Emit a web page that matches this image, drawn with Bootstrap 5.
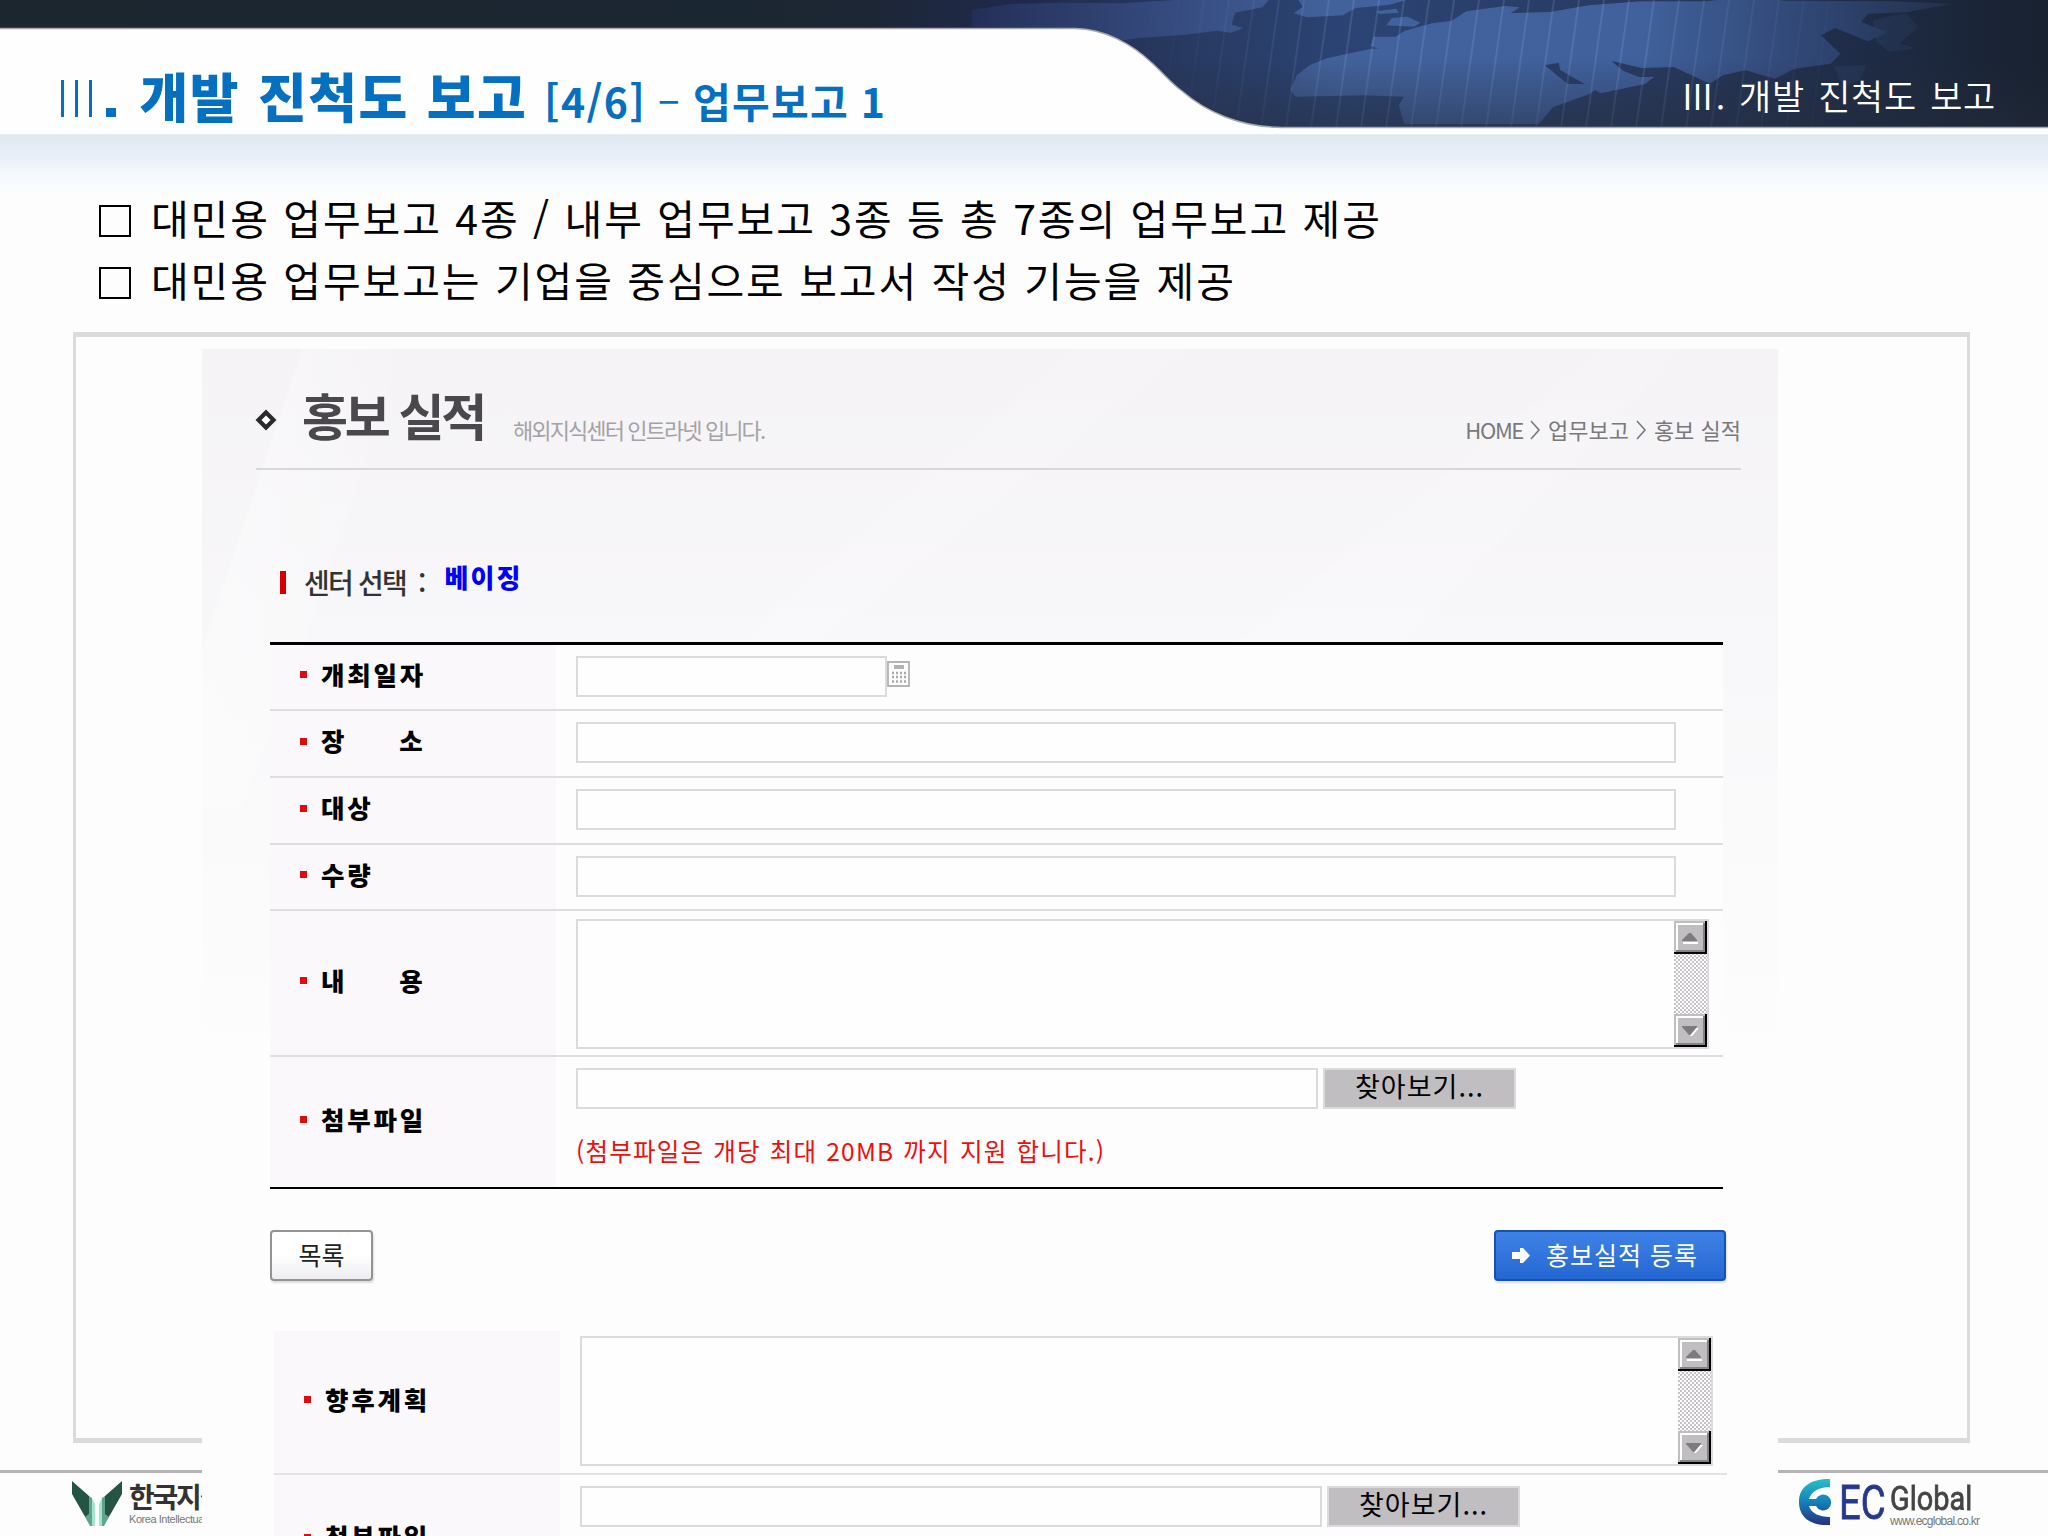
<!DOCTYPE html>
<html lang="ko">
<head>
<meta charset="utf-8">
<title>개발 진척도 보고</title>
<link href="https://cdn.jsdelivr.net/npm/bootstrap@5.3.0/dist/css/bootstrap.min.css" rel="stylesheet">
<script src="https://cdn.jsdelivr.net/npm/bootstrap@5.3.0/dist/js/bootstrap.bundle.min.js"></script>
<style>
html,body{margin:0;background:#fdfdfd}
body{font-family:"Noto Sans CJK KR",sans-serif;color:#000}
.slide{width:2048px;height:1536px;background:#fdfdfd}
.slide *{white-space:nowrap}
.top-band{height:135px}
.band-art{left:0;top:0;width:2048px;height:135px}
.band-title{color:#0570c0;font-weight:700;padding-left:61px;height:135px}
.numeral{gap:11.5px;margin-right:14px;margin-top:80px}
.numeral i{display:block;width:2.5px;height:37px;background:#0570c0}
.t-dot{width:10px;height:9px;background:#0570c0;margin:108px 24px 0 0}
.t-main{font-size:53px;line-height:60px;letter-spacing:1.4px;word-spacing:2px;margin:65px 17px 0 0;font-weight:900}
.t-sub{font-size:41px;line-height:50px;margin-top:75px;letter-spacing:1.3px;word-spacing:-1px}
.t-sub .thin{font-weight:400}
.crumb-top{color:#fff;font-size:35px;line-height:44px;letter-spacing:.7px;word-spacing:2.8px;margin:73px 52px 0 0;font-weight:350}
.sky{height:60px;background:linear-gradient(#dfe8ec,#e6edf7 25%,#ebf0fb 45%,#f3f8fd 60%,#f9fdfe 85%,#fdfdfd)}
.points{margin-top:-4px;height:141px}
.point{height:62px;padding-left:99px;gap:20px;font-size:41px;line-height:50px;letter-spacing:1.9px;word-spacing:.1px;padding-top:1px}
.point i{width:32px;height:32px;border:2px solid #000;margin-top:13px}
.frame{width:1897px;height:1111px;margin-left:73px;border:3px solid #dcdadd;border-top-width:5px;border-bottom-width:5px}
.shot{width:1576px;height:1188px;margin:12px 0 0 126px;background:#fdfdfd;z-index:2}
.shot-bg{left:0;top:0;width:1576px;height:700px}
.shot-head{height:121px;margin:0 37px 0 54px;border-bottom:2px solid #d8d6d9}
.diamond{width:22px;height:22px;margin:60px 0 0 -1px}
.h-title{font-size:50px;line-height:60px;letter-spacing:-3.2px;color:#4a484c;font-weight:700;margin:35px 0 0 25px}
.h-sub{font-size:22px;line-height:30px;letter-spacing:-1.9px;color:#a5a2a6;margin:65px 0 0 29px}
.trail{gap:7px;color:#7b787c;font-size:22px;line-height:30px;margin-top:65px}
.trail .home{letter-spacing:-1.4px}
.center-pick{height:172px;padding-left:78px}
.center-pick i{width:6px;height:23px;background:#d40000;margin-top:101px}
.c-label{font-size:28px;line-height:36px;letter-spacing:-1.8px;color:#333;margin:94px 0 0 18px;font-weight:500}
.c-name{font-size:26px;line-height:30px;font-weight:900;color:#00f;letter-spacing:2px;margin:92px 0 0 20px}
.grid-form{margin-left:68px;width:1453px;border-top:3px solid #000;border-bottom:2px solid #000}
.f-row{border-bottom:2px solid #dfdde0;height:67px}
.f-row:last-child{border-bottom:0}
.f-label{width:286px;background:#faf8fb;padding:0 0 5px 30px;font-size:25.5px;font-weight:900;letter-spacing:2.8px;line-height:30px;gap:14px}
.f-label:before{content:"";width:7px;height:7px;background:#e00b0b;flex:none}
.f-label .far{margin-left:32px}
.f-label span{position:relative;top:-1px}
.f-val{background:#fdfdfd;padding:0 0 2px 20px;flex:1}
.file-val{padding-top:11px}
.line-in{height:41px;width:1100px;border:2px solid #dcdadd;border-radius:0;background:#fefefe;padding:0}
.line-in.form-control{flex:none}
.w-date{width:311px}.w-file{width:742px}
.area{width:1133px;height:130px;border:2px solid #dcdadd;background:#fefefe}
.bar{width:33px;background:repeating-conic-gradient(#c4c2c5 0 25%,#fff 0 50%) 0 0/4px 4px}
.bar svg{display:block;width:33px;height:33px}
.browse{height:41px;width:193px;margin-left:5px;border:2px solid #dcdadd;border-radius:0;background:#c0bec1;padding:0 0 5px 0;font-size:27px;line-height:30px;letter-spacing:1px;color:#000}
.note{color:#f00d0d;font-size:24.5px;line-height:30px;margin-top:27px;letter-spacing:1.2px;word-spacing:1px}
.acts{margin:41px 52px 0 68px;height:101px}
.b-list{width:103px;height:51px;border:2px solid #949296;border-radius:4px;background:linear-gradient(#fff 50%,#eeecef);box-shadow:1px 2px 2px #ddd;padding:0 0 4px;font-size:25px;line-height:30px;color:#222}
.b-go{width:232px;height:51px;border:2px solid #1a50b4;border-radius:4px;background:linear-gradient(#3f82e6,#2567d2);color:#fff;padding:0 0 0 16px;font-size:25px;line-height:30px;letter-spacing:1px;box-shadow:1px 2px 2px #ddd}
.b-go span{padding-bottom:4px}
.more{margin-left:72px;width:1453px;height:206px}
.more .f-row{height:144px;border-color:#e4e2e5}
.foot{left:0;bottom:0;width:2048px;height:66px;border-top:3px solid #b5b3b6}
.logo-a{left:72px;top:8px;width:50px;height:46px}
.kname{font-size:28px;line-height:34px;font-weight:700;color:#333;letter-spacing:-2.2px}
.kline{font:11px/12px "Liberation Sans",sans-serif;color:#777;letter-spacing:-.45px}
.k-block{padding:6px 0 0 129px}
.ec-block{padding:6px 66px 0 0;gap:4px}
.ec{font:49px/46px Roboto,sans-serif;color:#26388c;transform:scaleX(.78);transform-origin:0 0;width:47px;-webkit-text-stroke:.8px #26388c;margin-top:1px}
.gl{font:34px/28px Roboto,sans-serif;color:#444;transform:scaleX(.85);transform-origin:0 0;-webkit-text-stroke:.8px #444;margin:5px 0 3px;width:92px}
.url{font:12px/12px "Liberation Sans",sans-serif;color:#777;letter-spacing:-.75px}
</style>
</head>
<body>
<svg width="0" height="0" class="position-absolute">
  <defs>
    <symbol id="up" viewBox="0 0 33 33"><path fill="#c0bec1" d="M0 0h33v33H0z"/><path fill="none" stroke="#fff" stroke-width="2" d="M3 29V3h26"/><path fill="none" stroke="#848286" stroke-width="2" d="M2 30h28V2"/><path fill="none" stroke="#000" stroke-width="2" d="M0 32h32V0"/><path fill="#fff" d="M9 21h15v2H9z"/><path fill="#7d7b7e" d="M8 20v-1l7-7h2l6 7v1z"/></symbol>
    <symbol id="down" viewBox="0 0 33 33"><path fill="#c0bec1" d="M0 0h33v33H0z"/><path fill="none" stroke="#fff" stroke-width="2" d="M3 29V3h26"/><path fill="none" stroke="#848286" stroke-width="2" d="M2 30h28V2"/><path fill="none" stroke="#000" stroke-width="2" d="M0 32h32V0"/><path fill="#fff" d="M16 22h2l7-8h-3z"/><path fill="#7d7b7e" d="M8 12h15v1l-7 8h-1l-7-8z"/></symbol>
  </defs>
</svg>
<div class="slide position-relative overflow-hidden">
  <header class="top-band position-relative">
    <svg class="band-art position-absolute" viewBox="0 0 2048 135">
      <defs>
        <linearGradient id="sea" gradientUnits="userSpaceOnUse" x1="0" x2="2048" y1="0" y2="0"><stop offset="0" stop-color="#1b262f"/><stop offset=".42" stop-color="#1c2634"/><stop offset=".5" stop-color="#20294c"/><stop offset=".58" stop-color="#283a62"/><stop offset=".66" stop-color="#2b4474"/><stop offset=".8" stop-color="#283a60"/><stop offset=".9" stop-color="#1f2d48"/><stop offset="1" stop-color="#18212f"/></linearGradient>
        <linearGradient id="land" gradientUnits="userSpaceOnUse" x1="-80" x2="1500" y1="0" y2="0"><stop offset="0" stop-color="#242f58"/><stop offset=".2" stop-color="#364c80"/><stop offset=".35" stop-color="#42629c"/><stop offset=".65" stop-color="#40619c"/><stop offset=".85" stop-color="#2c406a"/><stop offset="1" stop-color="#1d2839"/></linearGradient>
        <linearGradient id="shade" x1="0" x2="0" y1="0" y2="1"><stop offset=".45" stop-color="#252c3c" stop-opacity="0"/><stop offset="1" stop-color="#252c3c" stop-opacity=".5"/></linearGradient>
        <pattern id="rays" width="25" height="130" patternUnits="userSpaceOnUse" patternTransform="skewX(-8)"><path d="M4 0v130" stroke="#a6c2ee" stroke-opacity=".2" stroke-width="1.6"/></pattern>
        <linearGradient id="fadeR"><stop offset="0" stop-color="#000"/><stop offset=".15" stop-color="#222"/><stop offset=".32" stop-color="#fff"/><stop offset=".6" stop-color="#fff"/><stop offset=".82" stop-color="#000"/></linearGradient>
        <mask id="rayMask"><rect x="1024" width="1024" height="135" fill="url(#fadeR)"/></mask>
      </defs>
      <rect width="2048" height="128" fill="url(#sea)"/>
      <g transform="translate(1024 0) scale(.6531 .3333)" fill="url(#land)">
        <path d="M-80 30L-20 12 60 8 150 10 230 0h145l-10 22-42 16-5 36 18 10-20 14-20-6-50 12-70 10-50 14-20-26L40 84-80 80z"/>
        <path d="M420 0h165l-25 14-52 10-20 22-55 6-20-12 14-20z"/>
        <path d="M540 34l30-8 4 12-30 4zM555 76l8-22 24-4 20 18-10 12z"/>
        <path d="M531 138l4-28 34 0 14-18 42-22 30-8 22-28 60-16 22 4-14 18 60-4 60-20 80-12 100 0 60-14 60 12 170 2 85 8-70 25-58 4-10 25 40 30-30 28-50-40-22 22 30 55-15 30-55 15-30 30-45-25-35 15-20 25-55-50-50 3-46-22 18 30 26 20 22-2-14 22-68 28-62-70-2-22-28 10-50-6-26-32-15 10 20 24-22 2-26-22-60 14z"/>
        <path d="M408 270l10-45 20-30 26-20 66-28 52-8 50-20 16 4 8 28 70 8 50 4 26 40 30 48 54 3-20 28-56 40-22 50H582l-8-56 8-26-60-4-106 4z"/>
        <path d="M1300 60l50-20 20 40-30 50 25 15-40 10-20-30z" opacity=".5"/>
        <path d="M1240 200l50-5-10 45-25 20z" opacity=".4"/>
      </g>
      <rect x="1024" width="1024" height="128" fill="url(#rays)" mask="url(#rayMask)"/>
      <rect width="2048" height="128" fill="url(#shade)"/>
      <path d="M-5 28.500H1075C1105 29 1132 44 1152 63C1164 74 1172 84 1182 91C1206 112 1240 127 1282 127.500H2055V140H-5z" fill="#fefefe" stroke="#a5a8ac" stroke-width="1.5"/>
      <path d="M0 134h2048v2H0z" fill="#e8eef0"/>
    </svg>
    <div class="position-relative d-flex justify-content-between align-items-start">
      <div class="band-title d-flex align-items-start">
        <div class="numeral d-flex"><i></i><i></i><i></i></div>
        <span class="t-dot"></span>
        <span class="t-main">개발 진척도 보고</span>
        <span class="t-sub">[4/6] <span class="thin">–</span> 업무보고 1</span>
      </div>
      <div class="crumb-top">Ⅲ. 개발 진척도 보고</div>
    </div>
  </header>
  <div class="sky"></div>
  <section class="points">
    <div class="point d-flex"><i></i><span>대민용 업무보고 4종 / 내부 업무보고 3종 등 총 7종의 업무보고 제공</span></div>
    <div class="point d-flex"><i></i><span>대민용 업무보고는 기업을 중심으로 보고서 작성 기능을 제공</span></div>
  </section>
  <main class="frame">
    <div class="shot position-relative">
      <svg class="shot-bg position-absolute" viewBox="0 0 1576 700" preserveAspectRatio="none">
        <defs><linearGradient id="pv" x1="0" x2="0" y1="0" y2="1"><stop offset="0" stop-color="#f5f3f6"/><stop offset=".45" stop-color="#f8f7f9"/><stop offset="1" stop-color="#fdfdfd"/></linearGradient>
        <linearGradient id="ph" x1="0" x2="1"><stop offset="0" stop-color="#fdfdfd" stop-opacity=".8"/><stop offset="1" stop-color="#fdfdfd" stop-opacity=".1"/></linearGradient></defs>
        <path fill="url(#pv)" d="M0 0h1576v700H0z"/>
        <path fill="url(#ph)" d="M100 0h100l-100 300-60 160H0V300z" opacity=".6"/>
        <path fill="#fff" opacity=".15" d="M870 0h120L620 290h-80zM1400 0h80L1100 400H900z"/>
      </svg>
      <div class="position-relative">
        <div class="shot-head d-flex align-items-start">
          <svg class="diamond" viewBox="0 0 22 22"><path d="M11 3.500L18.500 11 11 18.500 3.500 11z" fill="#fff" stroke="#2b292d" stroke-width="4.2"/></svg>
          <span class="h-title">홍보 실적</span>
          <span class="h-sub">해외지식센터 인트라넷 입니다.</span>
          <div class="trail d-flex ms-auto"><span class="home">HOME</span><svg width="11" height="30" viewBox="0 0 11 30"><path d="M1 7l8 9-8 9" fill="none" stroke="#7b787c" stroke-width="1.6"/></svg><span>업무보고</span><svg width="11" height="30" viewBox="0 0 11 30"><path d="M1 7l8 9-8 9" fill="none" stroke="#7b787c" stroke-width="1.6"/></svg><span>홍보 실적</span></div>
        </div>
        <div class="center-pick d-flex align-items-start"><i></i><span class="c-label">센터 선택 &nbsp;:</span><span class="c-name">베이징</span></div>
        <form class="grid-form">
          <div class="f-row d-flex" style="height:66px"><div class="f-label d-flex align-items-center"><span>개최일자</span></div><div class="f-val d-flex align-items-center"><input class="form-control line-in w-date"><svg class="mb-1" width="23" height="26" viewBox="0 0 23 26"><path d="M1 1h21v24H1z" fill="#fdfdfd" stroke="#b4b2b5" stroke-width="1.8"/><path d="M7 4h10v4H7z" fill="#b4b2b5"/><path d="M5 12h14M5 16h14M5 20.500h14" stroke="#aaa8ab" stroke-width="2.4" stroke-dasharray="2 2"/></svg></div></div>
          <div class="f-row d-flex"><div class="f-label d-flex align-items-center"><span>장<span class="far"></span> &nbsp;소</span></div><div class="f-val d-flex align-items-center"><input class="form-control line-in"></div></div>
          <div class="f-row d-flex"><div class="f-label d-flex align-items-center"><span>대상</span></div><div class="f-val d-flex align-items-center"><input class="form-control line-in"></div></div>
          <div class="f-row d-flex" style="height:66px"><div class="f-label d-flex align-items-center"><span>수량</span></div><div class="f-val d-flex align-items-center"><input class="form-control line-in"></div></div>
          <div class="f-row d-flex" style="height:146px"><div class="f-label d-flex align-items-center"><span>내<span class="far"></span> &nbsp;용</span></div><div class="f-val pt-1 d-flex align-items-center"><div class="area d-flex justify-content-end"><div class="bar d-flex flex-column justify-content-between"><svg><use href="#up"/></svg><svg><use href="#down"/></svg></div></div></div></div>
          <div class="f-row d-flex" style="height:130px"><div class="f-label d-flex align-items-center"><span>첨부파일</span></div><div class="f-val file-val"><div class="d-flex"><input class="form-control line-in w-file"><button type="button" class="btn browse">찾아보기...</button></div><div class="note">(첨부파일은 개당 최대 20MB 까지 지원 합니다.)</div></div></div>
        </form>
        <div class="acts d-flex justify-content-between align-items-start">
          <button type="button" class="btn b-list">목록</button>
          <button type="button" class="btn b-go d-flex align-items-center"><svg width="18" height="17" viewBox="0 0 18 17" class="me-3"><path fill="#fff" d="M0 5h8V1h3l7 7.500-7 7.500H8v-4H0z"/></svg><span>홍보실적 등록</span></button>
        </div>
        <div class="more">
          <div class="f-row d-flex"><div class="f-label d-flex align-items-center"><span>향후계획</span></div><div class="f-val d-flex align-items-center"><div class="area d-flex justify-content-end"><div class="bar d-flex flex-column justify-content-between"><svg><use href="#up"/></svg><svg><use href="#down"/></svg></div></div></div></div>
          <div class="f-row d-flex" style="height:129px"><div class="f-label d-flex align-items-center"><span>첨부파일</span></div><div class="f-val file-val"><div class="d-flex"><input class="form-control line-in w-file"><button type="button" class="btn browse">찾아보기...</button></div></div></div>
        </div>
      </div>
    </div>
  </main>
  <footer class="foot position-absolute d-flex justify-content-between">
    <svg class="logo-a position-absolute" viewBox="0 0 50 46"><path fill="#245443" d="M0 0l17 15v26L12 34 0 13zM50 0L33 15v26l5-7 12-21z"/><path fill="#5fa48a" d="M17 15l3 2v28h-2l-5-9 4-3zM33 15l-3 2v28h2l5-9-4-3z"/><path fill="#a4e4cc" d="M20 17l3 6v22h-3zM30 17l-3 6v22h3z"/></svg>
    <div class="k-block"><div class="kname">한국지식</div><div class="kline">Korea Intellectual</div></div>
    <div class="ec-block d-flex align-items-start">
      <svg width="38" height="47" viewBox="0 0 38 47"><defs><linearGradient id="ecg" x1="0" x2="0" y1="0" y2="1"><stop offset="0" stop-color="#28c0c8"/><stop offset=".5" stop-color="#1480b8"/><stop offset="1" stop-color="#263080"/></linearGradient></defs><path fill="url(#ecg)" d="M33 0v8C21 8 14 13 12 20h7a8 8 0 1 1 0 7h-7c2 7 10 11 21 11v8C13 47 2 38 2 23S13 0 33 0z"/></svg>
      <span class="ec">EC</span>
      <div><div class="gl">Global</div><div class="url">www.ecglobal.co.kr</div></div>
    </div>
  </footer>
</div>
</body>
</html>
